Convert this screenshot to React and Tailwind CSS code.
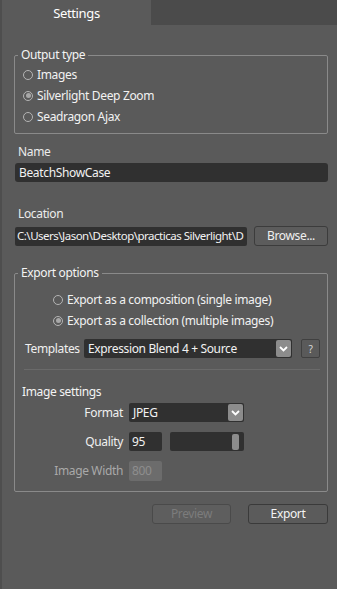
import React from "react";

const Radio = ({ checked, label }) => (
  <div className="flex items-center h-[21px] gap-[4px]">
    <span className="w-[10px] h-[10px] rounded-full border border-[#b4b4b4] flex items-center justify-center">
      {checked && <span className="w-[5px] h-[5px] rounded-full bg-[#a8a8a8]" />}
    </span>
    <span className="text-[#f2f2f2]">{label}</span>
  </div>
);

const Chevron = () => (
  <span className="w-[15px] h-[17px] bg-[#8c8c8c] rounded-[2px] flex items-center justify-center mr-[1px]">
    <svg width="9" height="6" viewBox="0 0 9 6">
      <polyline points="1,1 4.5,4.5 8,1" fill="none" stroke="#fff" strokeWidth="1.8" />
    </svg>
  </span>
);

const Select = ({ value, width }) => (
  <div className={`${width} h-[19px] bg-[#303030] rounded-[2px] flex items-center justify-between pl-[4px] text-[#f2f2f2]`}>
    <span>{value}</span>
    <Chevron />
  </div>
);

export default function App() {
  return (
    <div
      className="w-[337px] h-[589px] bg-[#5a5a5a] overflow-hidden text-[12px] leading-[16px] tracking-[-0.35px] text-[#f0f0f0] border-l-[2px] border-[#4e4e4e]"
      style={{ fontFamily: '"Noto Sans", "Open Sans", sans-serif' }}
    >
      {/* tab bar */}
      <div className="flex h-[25px]">
        <div className="w-[149px] flex items-center justify-center text-[13px] text-white">Settings</div>
        <div className="flex-1 bg-[#4b4b4b]" />
      </div>

      <div className="pl-[12px] pr-[9px]">
        {/* Output type */}
        <fieldset className="mt-[22px] border border-[#8a8a8a] rounded-[2px] pb-[6px]">
          <legend className="ml-[3px] px-[3px] text-[#f4f4f4]">Output type</legend>
          <div className="pl-[8px] pt-[1px]">
            <Radio label="Images" />
            <Radio checked label="Silverlight Deep Zoom" />
            <Radio label="Seadragon Ajax" />
          </div>
        </fieldset>

        {/* Name */}
        <div className="mt-[10px] pl-[4px] text-[#ececec]">Name</div>
        <div className="mt-[3px] ml-[1px] h-[19px] bg-[#303030] rounded-[3px] flex items-center pl-[4px] text-[#f2f2f2]">
          BeatchShowCase
        </div>

        {/* Location */}
        <div className="mt-[24px] pl-[4px] text-[#ececec]">Location</div>
        <div className="mt-[4px] ml-[1px] flex items-center gap-[7px]">
          <div className="w-[232px] h-[19px] bg-[#303030] rounded-[2px] flex items-center pl-[2px] overflow-hidden whitespace-nowrap text-[11.5px] tracking-[-0.5px] text-[#f2f2f2]">
            C:\Users\Jason\Desktop\practicas Silverlight\D
          </div>
          <button className="w-[74px] h-[20px] bg-[#5c5c5c] border border-[#3c3c3c] rounded-[3px] text-[#f0f0f0]">
            Browse...
          </button>
        </div>

        {/* Export options */}
        <fieldset className="mt-[19px] border border-[#8a8a8a] rounded-[2px] pb-[10px]">
          <legend className="ml-[3px] px-[3px] text-[#f4f4f4]">Export options</legend>
          <div className="pl-[38px] pt-[8px]">
            <Radio label="Export as a composition (single image)" />
            <Radio checked label="Export as a collection (multiple images)" />
          </div>

          <div className="mt-[8px] pl-[10px] flex items-center">
            <span className="w-[59px] text-[#f0f0f0]">Templates</span>
            <Select value="Expression Blend 4 + Source" width="w-[208px]" />
            <span className="ml-[9px] w-[19px] h-[19px] border border-[#404040] rounded-[2px] flex items-center justify-center text-[10px] text-[#d8d8d8]">
              ?
            </span>
          </div>

          <div className="mt-[11px] ml-[9px] mr-[7px] h-[1px] bg-[#6a6a6a]" />

          <div className="mt-[14px] pl-[7px] text-[#f4f4f4]">Image settings</div>

          <div className="mt-[3px] flex items-center gap-[6px]">
            <span className="w-[108px] text-right">Format</span>
            <Select value="JPEG" width="w-[115px]" />
          </div>

          <div className="mt-[10px] flex items-center gap-[6px]">
            <span className="w-[108px] text-right">Quality</span>
            <div className="w-[33px] h-[19px] bg-[#303030] rounded-[2px] flex items-center pl-[3px] text-[#f2f2f2]">95</div>
            <div className="ml-[2px] w-[74px] h-[19px] bg-[#303030] rounded-[2px] flex items-center justify-end pr-[5px]">
              <span className="w-[7px] h-[16px] bg-[#8c8c8c] rounded-[2px]" />
            </div>
          </div>

          <div className="mt-[10px] flex items-center gap-[6px]">
            <span className="w-[108px] text-right text-[#a9a9a9]">Image Width</span>
            <div className="w-[33px] h-[20px] bg-[#6c6c6c] rounded-[2px] flex items-center pl-[3px] text-[#8e8e8e]">800</div>
          </div>
        </fieldset>

        {/* buttons */}
        <div className="mt-[12px] flex justify-end gap-[17px]">
          <button className="w-[79px] h-[20px] bg-[#5e5e5e] border border-[#4a4a4a] rounded-[3px] text-[#7c7c7c]">Preview</button>
          <button className="w-[80px] h-[20px] bg-[#5b5b5b] border border-[#3a3a3a] rounded-[3px] text-[#f4f4f4]">Export</button>
        </div>
      </div>
    </div>
  );
}
